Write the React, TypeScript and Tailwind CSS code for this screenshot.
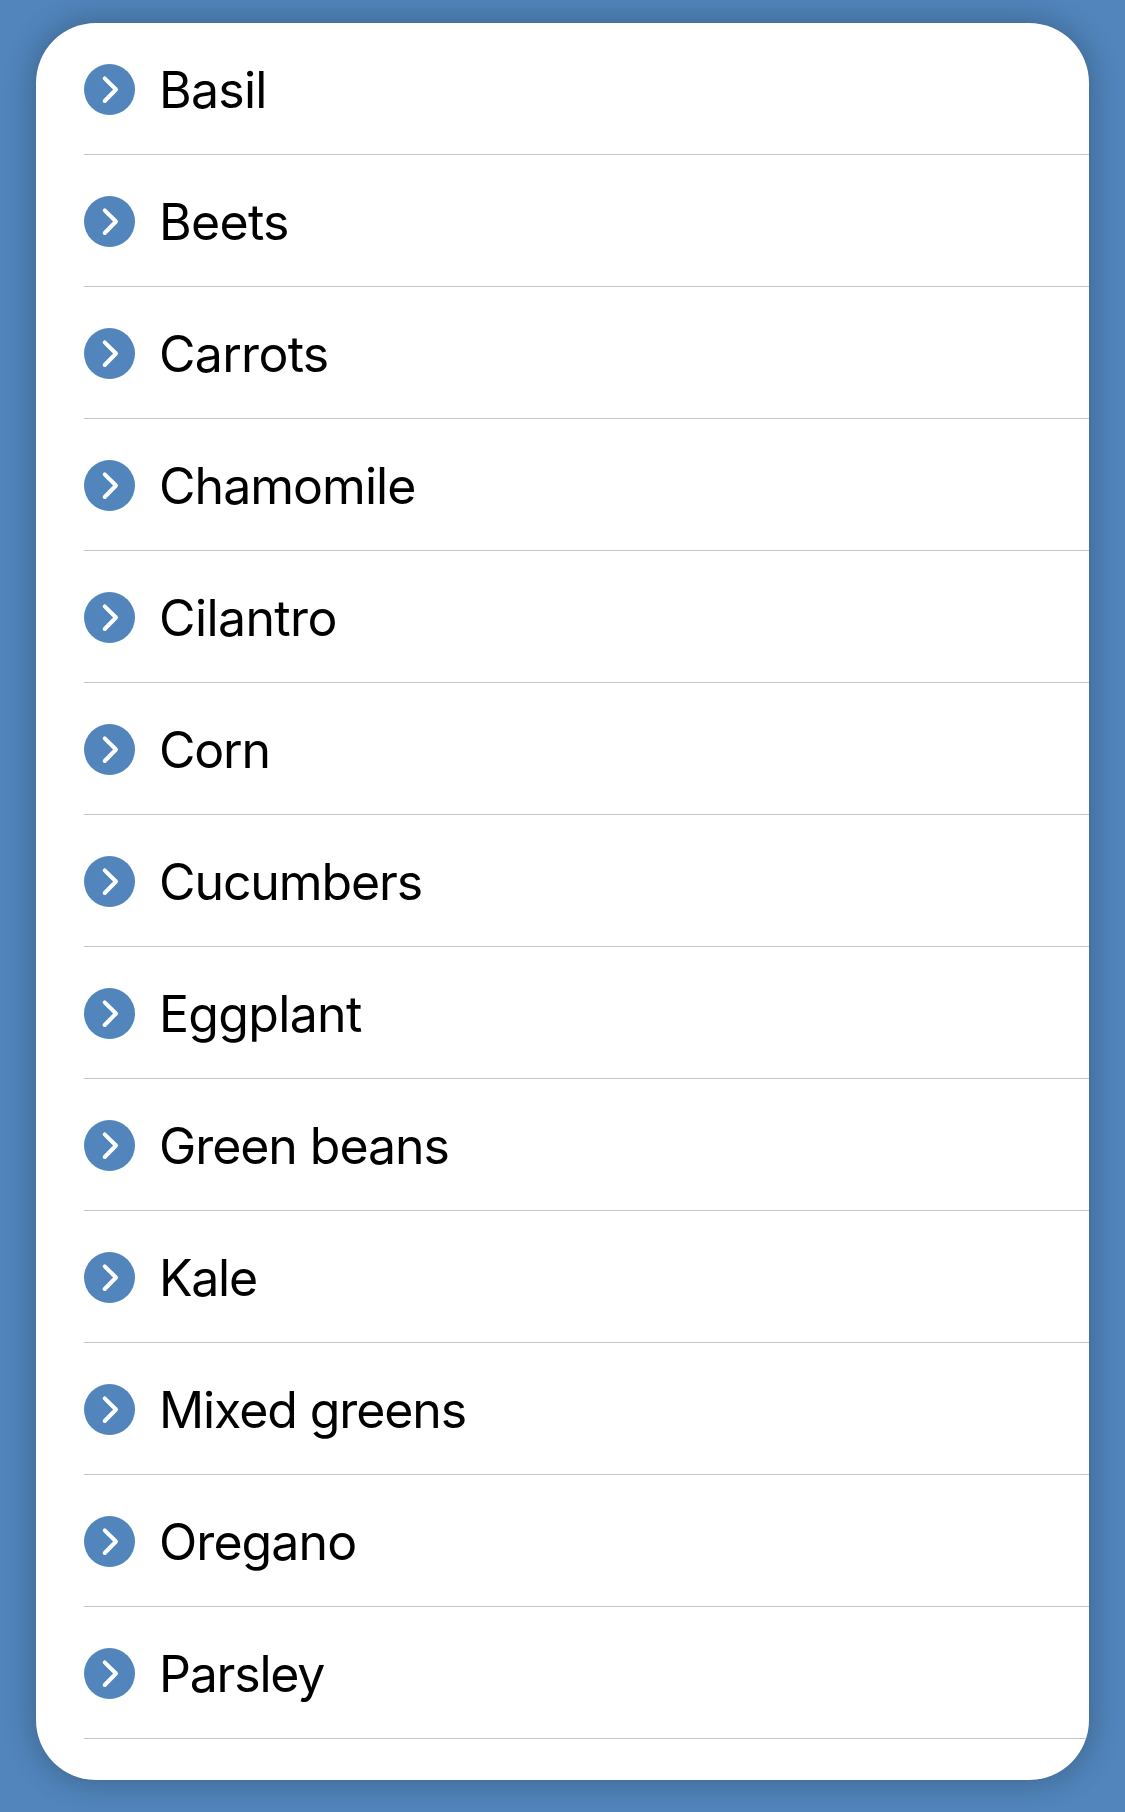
const items = [
  { name: "Basil", tracking: "tracking-[-0.75px]" },
  { name: "Beets", tracking: "tracking-[-0.7px]" },
  { name: "Carrots", tracking: "tracking-[-0.7px]" },
  { name: "Chamomile", tracking: "tracking-[-0.97px]" },
  { name: "Cilantro", tracking: "tracking-[-0.6px]" },
  { name: "Corn", tracking: "tracking-[-1.2px]" },
  { name: "Cucumbers", tracking: "tracking-[-1.1px]" },
  { name: "Eggplant", tracking: "tracking-[-0.68px]" },
  { name: "Green beans", tracking: "tracking-[-1.06px]" },
  { name: "Kale", tracking: "tracking-[-1.3px]" },
  { name: "Mixed greens", tracking: "tracking-[-1.1px]" },
  { name: "Oregano", tracking: "tracking-[-0.92px]" },
  { name: "Parsley", tracking: "tracking-[-1.2px]" },
];

function ChevronBadge() {
  return (
    <svg className="size-[51px] shrink-0" viewBox="0 0 51 51" fill="none" aria-hidden="true">
      <circle cx="25.5" cy="25.5" r="25.5" fill="#5185bc" />
      <path d="M20.7 14.3L32 25.5L20.7 37" stroke="white" strokeWidth="4" strokeLinecap="round" strokeLinejoin="round" />
    </svg>
  );
}

export default function App() {
  return (
    <main className="h-[1812px] w-[1125px] overflow-hidden bg-[#5185bc] px-9 pt-[23px] font-['Inter',sans-serif]">
      <section className="h-[1757px] overflow-hidden rounded-[60px] bg-white shadow-[0_0_32px_rgba(0,0,0,0.29)]">
        <ul className="pl-12">
          {items.map(({ name, tracking }) => (
            <li key={name} className="flex h-[132px] items-center gap-6 border-b border-[#c4c4c6] pt-0.5">
              <ChevronBadge />
              <span className={`text-[50px] leading-none text-black ${tracking}`}>{name}</span>
            </li>
          ))}
        </ul>
      </section>
    </main>
  );
}
